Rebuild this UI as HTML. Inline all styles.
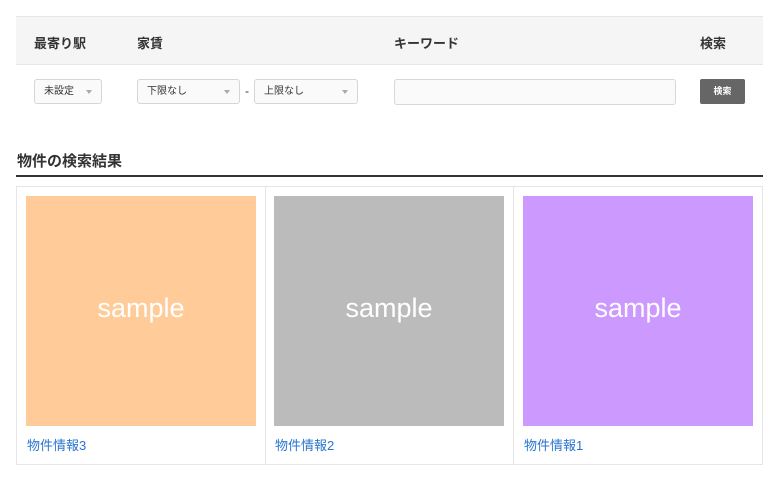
<!DOCTYPE html>
<html><head><meta charset="utf-8"><style>
*{box-sizing:border-box;margin:0;padding:0}
body{width:780px;height:487px;background:#fff;font-family:"Liberation Sans","Noto Sans CJK JP",sans-serif;color:#333;position:relative;overflow:hidden}
.a{position:absolute}
.hd{left:16px;top:16px;width:747px;height:49px;background:#f5f5f5;border-top:1px solid #e6e6e6;border-bottom:1px solid #e6e6e6}
.lb{font-size:13px;font-weight:bold;top:33px;color:#333}
.sel{top:79px;height:25px;border:1px solid #d6d6d6;border-radius:3px;background:#fafafa;font-size:10px;line-height:23px;padding-left:9px;color:#333}
.sel:after{content:"";position:absolute;right:9px;top:10px;border-left:3.5px solid transparent;border-right:3.5px solid transparent;border-top:4px solid #aaa}
.card{top:186px;height:279px;width:250px;border:1px solid #e6e6e6}
.img{position:absolute;left:9px;top:9px;width:230px;height:230px;color:#fff;font-size:27px;text-align:center;line-height:224px;font-family:"Liberation Sans",sans-serif}
.lk{position:absolute;left:10px;top:248px;font-size:13px;color:#2a74d0}
</style></head><body>
<div class="a hd"></div>
<div class="a lb" style="left:34px">最寄り駅</div>
<div class="a lb" style="left:137px">家賃</div>
<div class="a lb" style="left:394px">キーワード</div>
<div class="a lb" style="left:700px">検索</div>
<div class="a sel" style="left:34px;width:68px">未設定</div>
<div class="a sel" style="left:137px;width:103px">下限なし</div>
<div class="a" style="left:245px;top:84px;font-size:12px">-</div>
<div class="a sel" style="left:254px;width:104px">上限なし</div>
<div class="a" style="left:394px;top:79px;width:282px;height:26px;border:1px solid #d8d8d8;border-radius:3px;background:#fafafa"></div>
<div class="a" style="left:700px;top:79px;width:45px;height:25px;background:#666;border-radius:2px;color:#fff;font-size:9px;font-weight:bold;text-align:center;line-height:25px">検索</div>
<div class="a" style="left:17px;top:150px;font-size:15px;font-weight:bold;color:#333">物件の検索結果</div>
<div class="a" style="left:16px;top:175px;width:747px;height:2px;background:#333"></div>
<div class="a card" style="left:16px"><div class="img" style="background:#ffcc99">sample</div><div class="lk">物件情報3</div></div>
<div class="a card" style="left:265px;border-left:none;width:249px"><div class="img" style="background:#bbbbbb">sample</div><div class="lk">物件情報2</div></div>
<div class="a card" style="left:514px;border-left:none;width:249px"><div class="img" style="background:#cc99ff">sample</div><div class="lk">物件情報1</div></div>
</body></html>
